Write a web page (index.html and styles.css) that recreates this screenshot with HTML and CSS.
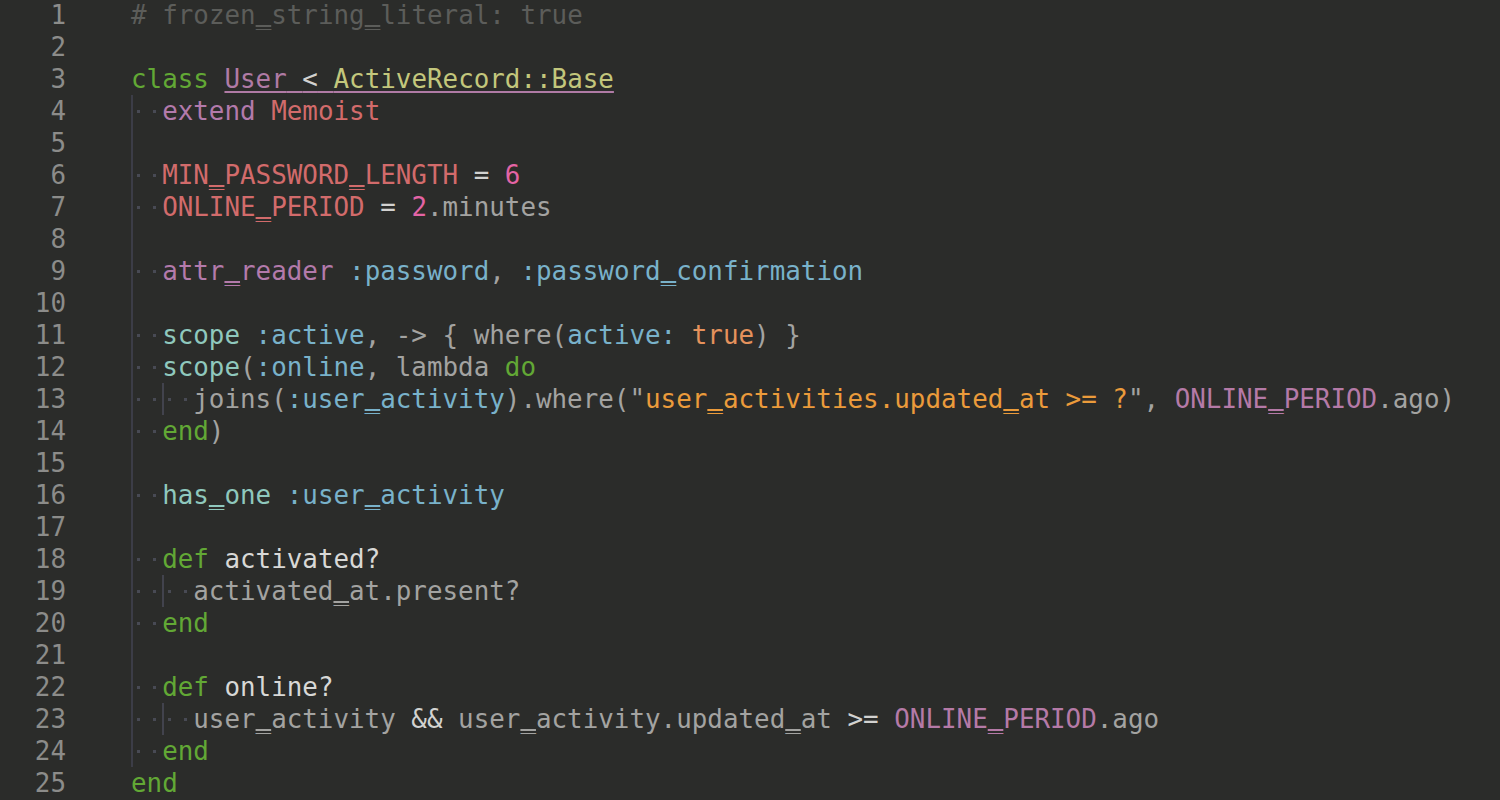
FILE: index.html
```html
<!DOCTYPE html>
<html>
<head>
<meta charset="utf-8">
<link rel="stylesheet" href="styles.css">
</head>
<body>
<div class="editor">
  <div class="gutter">
    <div>1</div><div>2</div><div>3</div><div>4</div><div>5</div><div>6</div><div>7</div><div>8</div><div>9</div><div>10</div><div>11</div><div>12</div><div>13</div><div>14</div><div>15</div><div>16</div><div>17</div><div>18</div><div>19</div><div>20</div><div>21</div><div>22</div><div>23</div><div>24</div><div>25</div>
  </div>
  <div class="code">
    <div class="ln"><span class="cm"># frozen<span class="u">_</span>string<span class="u">_</span>literal: true</span></div>
    <div class="ln"></div>
    <div class="ln"><span class="kw">class</span> <span class="decl"><span class="cls">User</span> <span class="op">&lt;</span> <span class="sup">ActiveRecord::Base</span></span></div>
    <div class="block">
      <div class="ln"><span class="ws"></span><span class="ws"></span><span class="mac">extend</span> <span class="cst">Memoist</span></div>
      <div class="ln"></div>
      <div class="ln"><span class="ws"></span><span class="ws"></span><span class="cst">MIN<span class="u">_</span>PASSWORD<span class="u">_</span>LENGTH</span> <span class="op">=</span> <span class="num">6</span></div>
      <div class="ln"><span class="ws"></span><span class="ws"></span><span class="cst">ONLINE<span class="u">_</span>PERIOD</span> <span class="op">=</span> <span class="num">2</span><span class="tx">.minutes</span></div>
      <div class="ln"></div>
      <div class="ln"><span class="ws"></span><span class="ws"></span><span class="mac">attr<span class="u">_</span>reader</span> <span class="sym">:password</span><span class="tx">, </span><span class="sym">:password<span class="u">_</span>confirmation</span></div>
      <div class="ln"></div>
      <div class="ln"><span class="ws"></span><span class="ws"></span><span class="fn">scope</span> <span class="sym">:active</span><span class="tx">, -&gt; { where(</span><span class="sym">active:</span> <span class="bool">true</span><span class="tx">) }</span></div>
      <div class="ln"><span class="ws"></span><span class="ws"></span><span class="fn">scope</span><span class="tx">(</span><span class="sym">:online</span><span class="tx">, lambda </span><span class="kw">do</span></div>
      <div class="ln"><span class="ws"></span><span class="ws"></span><span class="ws g"></span><span class="ws"></span><span class="tx">joins(</span><span class="sym">:user<span class="u">_</span>activity</span><span class="tx">).where(&quot;</span><span class="str">user<span class="u">_</span>activities.updated<span class="u">_</span>at &gt;= ?</span><span class="tx">&quot;, </span><span class="cref">ONLINE<span class="u">_</span>PERIOD</span><span class="tx">.ago)</span></div>
      <div class="ln"><span class="ws"></span><span class="ws"></span><span class="kw">end</span><span class="tx">)</span></div>
      <div class="ln"></div>
      <div class="ln"><span class="ws"></span><span class="ws"></span><span class="fn">has<span class="u">_</span>one</span> <span class="sym">:user<span class="u">_</span>activity</span></div>
      <div class="ln"></div>
      <div class="ln"><span class="ws"></span><span class="ws"></span><span class="kw">def</span> <span class="def">activated?</span></div>
      <div class="ln"><span class="ws"></span><span class="ws"></span><span class="ws g"></span><span class="ws"></span><span class="tx">activated<span class="u">_</span>at.present?</span></div>
      <div class="ln"><span class="ws"></span><span class="ws"></span><span class="kw">end</span></div>
      <div class="ln"></div>
      <div class="ln"><span class="ws"></span><span class="ws"></span><span class="kw">def</span> <span class="def">online?</span></div>
      <div class="ln"><span class="ws"></span><span class="ws"></span><span class="ws g"></span><span class="ws"></span><span class="tx">user<span class="u">_</span>activity </span><span class="op">&amp;&amp;</span><span class="tx"> user<span class="u">_</span>activity.updated<span class="u">_</span>at </span><span class="op">&gt;=</span> <span class="cref">ONLINE<span class="u">_</span>PERIOD</span><span class="tx">.ago</span></div>
      <div class="ln"><span class="ws"></span><span class="ws"></span><span class="kw">end</span></div>
    </div>
    <div class="ln"><span class="kw">end</span></div>
  </div>
</div>
</body>
</html>
```
FILE: styles.css
```css
html, body {
  margin: 0;
  padding: 0;
  background: #2b2c2a;
  height: 100%;
  overflow: hidden;
}

.editor {
  display: flex;
  margin-top: -1px;
  font-family: "DejaVu Sans Mono", "Liberation Mono", monospace;
  font-size: 25.88px;
  line-height: 32px;
  color: #a3a3a1;
}

.gutter {
  width: 66px;
  text-align: right;
  color: #8c8c8a;
  flex: none;
}

.code {
  margin-left: 65px;
  flex: 1;
}

.ln {
  height: 32px;
  white-space: pre;
}

.block {
  background: linear-gradient(#3c3d47, #3c3d47) no-repeat left top / 2px 100%;
}

.ws {
  display: inline-block;
  width: 1ch;
  height: 32px;
  vertical-align: top;
  background: linear-gradient(#484a54, #484a54) no-repeat center / 3px 3px;
}

.ws.g {
  background:
    linear-gradient(#484a54, #484a54) no-repeat center / 3px 3px,
    linear-gradient(#42434d, #42434d) no-repeat left top / 2px 100%;
}

.u {
  text-decoration-line: underline;
  text-decoration-thickness: 2px;
  text-underline-offset: 1px;
  text-decoration-skip-ink: none;
}

.cm { color: #5c5d5a; }
.kw { color: #62a835; }
.cls { color: #b07ba5; }
.sup { color: #c3c77c; }
.op { color: #d2d2d0; }
.decl {
  text-decoration: underline;
  text-decoration-color: #b07ba5;
  text-decoration-thickness: 2px;
  text-underline-offset: 3px;
}
.mac { color: #b37aab; }
.cst { color: #d26b6b; }
.num { color: #e364a5; }
.tx { color: #a3a3a1; }
.sym { color: #79b2ca; }
.fn { color: #8fc8bd; }
.bool { color: #e5925c; }
.str { color: #eb9b3b; }
.cref { color: #b57aa7; }
.def { color: #d8d8d6; }
```
